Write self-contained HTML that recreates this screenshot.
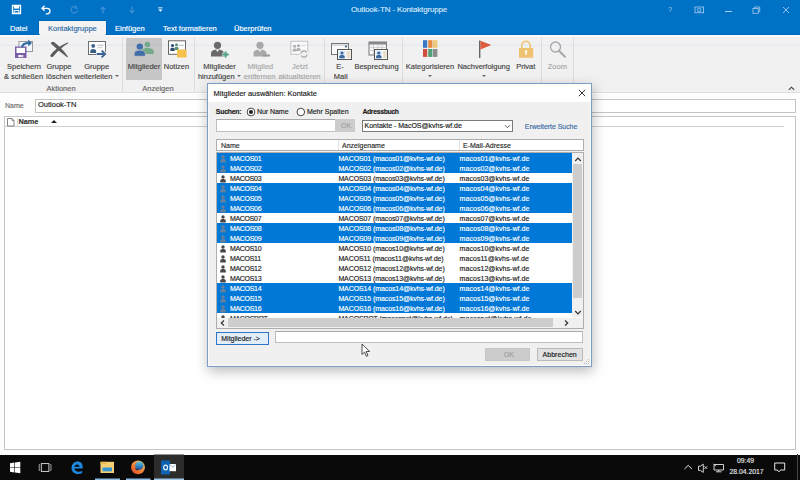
<!DOCTYPE html>
<html><head><meta charset="utf-8">
<style>
*{box-sizing:border-box;margin:0;padding:0}
html,body{width:800px;height:480px;overflow:hidden;background:#fff}
body{position:relative;font-family:"Liberation Sans",sans-serif;font-size:7.5px;color:#262626}
.a{position:absolute}
.t{position:absolute;white-space:nowrap;line-height:1;-webkit-text-stroke:0.15px currentColor}
#title{left:0;top:0;width:800px;height:35px;background:#0072c6}
#ribbon{left:0;top:35px;width:800px;height:58px;background:#f1f1f1;border-bottom:1px solid #dedede}
.tab{color:#fff;font-size:7.5px;top:25px}
.lbl{color:#444;font-size:7.5px;text-align:center}
.grp{color:#666;font-size:7.5px;text-align:center}
.sep{position:absolute;top:38px;width:1px;height:54px;background:#dddddd}
.dd{display:inline-block;width:0;height:0;border-left:2px solid transparent;border-right:2px solid transparent;border-top:2.2px solid #666;font-size:0;vertical-align:middle;position:relative;top:-0.5px}
.dis{color:#a8a8a8}
#content{left:0;top:94px;width:800px;height:361px;background:#fdfdfd}
#taskbar{left:0;top:454.5px;width:800px;height:25.5px;background:#0a0a0a}
#dlg{left:207px;top:83px;width:385px;height:284px;background:#f0f0f0;border:1px solid #7c9ec4;box-shadow:inset 0 0 0 1px #f6f9fc,1px 4px 12px rgba(0,0,0,.28)}
.row{position:absolute;left:0;width:355px;height:10px;font-size:7px;color:#1a1a1a;background:#fff}
.row.s{background:#0078d7;color:#fff}
.row span{-webkit-text-stroke:0.15px currentColor;position:absolute;top:1.9px;line-height:1;white-space:nowrap;letter-spacing:-0.1px}
</style></head><body>

<div id="title" class="a">
 <!-- save icon -->
 <svg class="a" style="left:11px;top:4px" width="11" height="11" viewBox="0 0 11 11"><path d="M1.5 1.5h8v8h-8z" fill="none" stroke="#fff" stroke-width="1.3"/><rect x="3" y="2" width="5" height="2.6" fill="#fff"/><rect x="3.2" y="6.6" width="4.6" height="2.6" fill="none" stroke="#fff" stroke-width="1"/></svg>
 <!-- undo -->
 <svg class="a" style="left:40px;top:4px" width="12" height="11" viewBox="0 0 12 11"><path d="M2.2 4.3h5a2.8 2.8 0 0 1 0 5.6H5.8" fill="none" stroke="#fff" stroke-width="1.3"/><path d="M4.6 1.8L2 4.3l2.6 2.5" fill="none" stroke="#fff" stroke-width="1.3"/></svg>
 <!-- redo disabled -->
 <svg class="a" style="left:69px;top:4px" width="11" height="11" viewBox="0 0 11 11"><path d="M7.8 3.6A3.3 3.3 0 1 0 8.6 6.5" fill="none" stroke="#3d8ed3" stroke-width="1.2"/><path d="M6.4 1.6v2.6H9" fill="none" stroke="#3d8ed3" stroke-width="1.1"/></svg>
 <!-- up -->
 <svg class="a" style="left:98px;top:4px" width="10" height="11" viewBox="0 0 10 11"><path d="M5 9.5V3.5M2.6 5.6L5 3.2l2.4 2.4" fill="none" stroke="#3d8ed3" stroke-width="1.3"/></svg>
 <!-- down -->
 <svg class="a" style="left:127px;top:4px" width="10" height="11" viewBox="0 0 10 11"><path d="M5 2.5v6M2.6 6.4L5 8.8l2.4-2.4" fill="none" stroke="#3d8ed3" stroke-width="1.3"/></svg>
 <!-- customize -->
 <svg class="a" style="left:156px;top:5px" width="9" height="9" viewBox="0 0 9 9"><rect x="2.3" y="2.4" width="4.2" height="0.9" fill="#fff"/><path d="M2.3 4.6h4.2L4.4 6.8z" fill="#fff"/></svg>
 <div class="t" style="left:351px;top:6px;font-size:8px;color:#d3e6f7;letter-spacing:-0.15px">Outlook-TN - Kontaktgruppe</div>
  <div class="t" style="left:668px;top:6px;font-size:7.5px;color:#a9cdee;-webkit-text-stroke:0">?</div>
 <svg class="a" style="left:694px;top:6px" width="11" height="8" viewBox="0 0 11 8"><rect x="1" y="1" width="8.6" height="5.8" fill="none" stroke="#a9cdee" stroke-width="0.8"/><rect x="3.8" y="2.8" width="3" height="2.6" fill="none" stroke="#a9cdee" stroke-width="0.7"/></svg>
 <div class="a" style="left:725px;top:10.8px;width:7px;height:0.9px;background:#a9cdee"></div>
 <svg class="a" style="left:752px;top:6px" width="9" height="8" viewBox="0 0 9 8"><rect x="1" y="2.5" width="5.2" height="4.8" fill="none" stroke="#a9cdee" stroke-width="0.8"/><path d="M2.5 2.5V1h5.2v4.8H6.2" fill="none" stroke="#a9cdee" stroke-width="0.8"/></svg>
 <svg class="a" style="left:782px;top:6px" width="8" height="8" viewBox="0 0 8 8"><path d="M1 1l6 6M7 1L1 7" stroke="#a9cdee" stroke-width="0.85"/></svg>
<!-- tabs -->
 <div class="t tab" style="left:10px">Datei</div>
 <div class="a" style="left:39px;top:20.5px;width:66.5px;height:15.5px;background:#f3f3f3;box-shadow:0 0 0 0.6px #005fae"></div>
 <div class="t tab" style="left:48px;color:#2b6aa8">Kontaktgruppe</div>
 <div class="t tab" style="left:115px">Einfügen</div>
 <div class="t tab" style="left:163px">Text formatieren</div>
 <div class="t tab" style="left:234px">Überprüfen</div>
</div>

<div id="ribbon" class="a"></div>
<div id="rib">
<div class="t lbl" style="left:-6.0px;top:62.5px;width:60px">Speichern</div>
<div class="t lbl" style="left:-6.5px;top:72.5px;width:60px">&amp; schließen</div>
<div class="t lbl" style="left:29.0px;top:62.5px;width:60px">Gruppe</div>
<div class="t lbl" style="left:29.0px;top:72.5px;width:60px">löschen</div>
<div class="t lbl" style="left:66.7px;top:62.5px;width:60px">Gruppe</div>
<div class="t lbl" style="left:66.5px;top:72.5px;width:60px">weiterleiten <span class="dd"></span></div>
<div class="t grp" style="left:31.0px;top:84.5px;width:60px">Aktionen</div>
<div class="sep" style="left:122px"></div>
<div class="a" style="left:126px;top:37.5px;width:36px;height:42.5px;background:#c6c6c6"></div>
<div class="t lbl" style="left:124.0px;top:62.5px;width:40px">Mitglieder</div>
<div class="t lbl" style="left:146.5px;top:62.5px;width:60px">Notizen</div>
<div class="t grp" style="left:128.0px;top:84.5px;width:60px">Anzeigen</div>
<div class="sep" style="left:194px"></div>
<div class="t lbl" style="left:189.5px;top:62.5px;width:60px">Mitglieder</div>
<div class="t lbl" style="left:189.3px;top:72.5px;width:60px">hinzufügen <span class="dd"></span></div>
<div class="t lbl dis" style="left:230.3px;top:62.5px;width:60px">Mitglied</div>
<div class="t lbl dis" style="left:229.7px;top:72.5px;width:60px">entfernen</div>
<div class="t lbl dis" style="left:270.0px;top:62.5px;width:60px">Jetzt</div>
<div class="t lbl dis" style="left:269.5px;top:72.5px;width:60px">aktualisieren</div>
<div class="sep" style="left:324px"></div>
<div class="t lbl" style="left:310.0px;top:62.5px;width:60px">E-</div>
<div class="t lbl" style="left:310.7px;top:72.5px;width:60px">Mail</div>
<div class="t lbl" style="left:346.5px;top:62.5px;width:60px">Besprechung</div>
<div class="sep" style="left:402px"></div>
<div class="t lbl" style="left:400.0px;top:62.5px;width:60px">Kategorisieren</div>
<div class="t lbl" style="left:400.3px;top:72.5px;width:60px"><span class="dd"></span></div>
<div class="t lbl" style="left:453.7px;top:62.5px;width:60px">Nachverfolgung</div>
<div class="t lbl" style="left:453.6px;top:72.5px;width:60px"><span class="dd"></span></div>
<div class="t lbl" style="left:495.79999999999995px;top:62.5px;width:60px">Privat</div>
<div class="sep" style="left:541px"></div>
<div class="t lbl dis" style="left:527.3px;top:62.5px;width:60px">Zoom</div>
<div class="sep" style="left:573px"></div>
<svg class="a" style="left:787.5px;top:85.5px" width="7" height="5" viewBox="0 0 7 5"><path d="M0.8 3.8l2.7-2.6 2.7 2.6" fill="none" stroke="#3a3a3a" stroke-width="1.1"/></svg>
</div>
<svg class="a" style="left:0;top:0" width="800" height="94" viewBox="0 0 800 94">
<rect x="0" y="34.2" width="40" height="0.8" fill="#0064b4"/><rect x="105.5" y="34.2" width="694.5" height="0.8" fill="#0064b4"/><rect x="0" y="35" width="40" height="1.5" fill="#f7fcff"/><rect x="105.5" y="35" width="694.5" height="1.5" fill="#f7fcff"/>

<!-- save & close -->
<rect x="19" y="41.5" width="13.5" height="10" fill="#f4f8fb" stroke="#9a9a9a" stroke-width="1"/>
<rect x="15" y="46.5" width="11.5" height="11.5" fill="#7b5ea7"/>
<rect x="16.5" y="47.8" width="8.5" height="5.2" fill="#fff"/>
<rect x="18.3" y="55" width="5" height="2.2" fill="#fff"/>
<rect x="21.5" y="55" width="0.8" height="2.2" fill="#a58fc6"/>
<path d="M22 47.5C22.3 44.5 24.5 43 28.8 43" fill="none" stroke="#2f6aa3" stroke-width="2.2"/>
<path d="M28.2 39.6l3.8 3.4-3.8 3.4z" fill="#2f6aa3"/>
<!-- X -->
<path d="M50.8 43.6Q51.4 41.2 53.8 42Q61.8 47.6 67.9 56.6Q67.6 57.5 66.8 57Q58.8 51.2 50.8 43.6z" fill="#5a5a5a"/><path d="M50.2 55.4Q56 47.4 67.4 42.5Q68.6 42.4 68.2 43.3Q59.4 48.6 53.2 56.6Q50.8 58.2 50.2 55.4z" fill="#5a5a5a"/>
<!-- weiterleiten card -->
<rect x="88.5" y="41.5" width="17" height="13" fill="#fff" stroke="#6e6e6e" stroke-width="1"/>
<circle cx="93.2" cy="45.9" r="1.9" fill="#3a5d85"/>
<path d="M90.3 53v-1.8c0-1.5 1.3-2.2 2.9-2.2s2.9 0.7 2.9 2.2V53z" fill="#3a5d85"/>
<rect x="97.5" y="44.8" width="6" height="0.8" fill="#aaa"/><rect x="97.5" y="47.3" width="5" height="0.8" fill="#bbb"/>
<path d="M96.5 54h8.5M101.6 50.6l3.6 3.4-3.6 3.4" fill="none" stroke="#f1f1f1" stroke-width="3.6"/><path d="M96.8 54h8.4M101.6 50.6l3.6 3.4-3.6 3.4" fill="none" stroke="#3e6396" stroke-width="1.8"/>
<!-- Mitglieder (selected) -->
<circle cx="147.4" cy="44.5" r="2.8" fill="#74a989"/>
<path d="M141 54v-2.5c0-2.4 2.9-3.6 6.4-3.6s6.4 1.2 6.4 3.6V54z" fill="#74a989"/>
<circle cx="139.8" cy="46.6" r="3.2" fill="#3f6ea9"/>
<path d="M134.2 56.3v-2.6c0-2.6 2.6-3.6 5.6-3.6s5.6 1 5.6 3.6v2.6z" fill="#3f6ea9" stroke="#c6c6c6" stroke-width="0.8"/>
<!-- Notizen -->
<rect x="168.5" y="40.8" width="17" height="13.5" fill="#fff" stroke="#666" stroke-width="1"/>
<circle cx="172.5" cy="45.5" r="1.6" fill="#2d4d6e"/><path d="M170.3 51v-1.5c0-1.2 1-1.8 2.2-1.8s2.2 0.6 2.2 1.8V51z" fill="#2d4d6e"/>
<circle cx="176.5" cy="44.8" r="1.5" fill="#5a8f73"/><path d="M174.5 50v-1.5c0-1.1 0.9-1.7 2-1.7s2 0.6 2 1.7V50z" fill="#5a8f73"/>
<rect x="179" y="44.8" width="4.5" height="0.7" fill="#999"/>
<rect x="177" y="49.5" width="9.5" height="8" fill="#f6c04d" rx="0.5"/>
<!-- Mitglieder hinzufuegen -->
<circle cx="217.5" cy="45.3" r="3.6" fill="#6a6a6a"/>
<path d="M211 56.6v-3.2c0-2.7 3-4 6.5-4s6.5 1.3 6.5 4v3.2z" fill="#6a6a6a"/>
<path d="M215.6 49.4l1.9 2.5 1.9-2.5z" fill="#f1f1f1"/>
<path d="M222.3 54.5h6.6M225.6 51.2v6.6" stroke="#f1f1f1" stroke-width="3.6"/><path d="M222.5 54.5h6.2M225.6 51.4v6.2" stroke="#4fa283" stroke-width="2.1"/>
<!-- Mitglied entfernen disabled -->
<circle cx="260" cy="45.3" r="3.6" fill="#a9a9a9"/>
<path d="M253.5 56.6v-3.2c0-2.7 3-4 6.5-4s6.5 1.3 6.5 4v3.2z" fill="#a9a9a9"/>
<path d="M258.1 49.4l1.9 2.5 1.9-2.5z" fill="#f1f1f1"/>
<rect x="263" y="54.5" width="7" height="2" fill="#9a9a9a"/>
<!-- Jetzt aktualisieren disabled -->
<rect x="290.8" y="41.3" width="17" height="13" fill="#fafafa" stroke="#c2c2c2" stroke-width="1"/>
<circle cx="294.6" cy="46.3" r="1.5" fill="#b0b0b0"/><path d="M292.5 51.5v-1.2c0-1.1 1-1.7 2.1-1.7s2.1 0.6 2.1 1.7v1.2z" fill="#b0b0b0"/>
<circle cx="298.5" cy="45.8" r="1.5" fill="#b0b0b0"/><path d="M296.4 51v-1.2c0-1.1 1-1.7 2.1-1.7s2.1 0.6 2.1 1.7V51z" fill="#b0b0b0"/>
<rect x="301.5" y="45.5" width="4" height="0.7" fill="#ccc"/>
<circle cx="304" cy="54" r="4.6" fill="#f1f1f1"/>
<path d="M300.8 53.5a3.3 3.3 0 0 1 6-1.2M307.2 54.5a3.3 3.3 0 0 1-6 1.2" fill="none" stroke="#a3a3a3" stroke-width="1.2"/>
<!-- E-Mail -->
<rect x="331.5" y="43.5" width="17" height="11" fill="#fafafa" stroke="#777" stroke-width="1"/>
<rect x="332" y="44" width="16" height="2" fill="#e0e0e0"/>
<circle cx="346" cy="46.5" r="1" fill="#2d4d6e"/>
<rect x="337.5" y="49.5" width="14" height="10" fill="#fff" stroke="#555" stroke-width="1"/>
<rect x="338.5" y="50.5" width="7" height="8" fill="#dce9f5"/>
<circle cx="342" cy="53" r="1.6" fill="#3b6aa0"/><path d="M339.3 58.2v-1.4c0-1.2 1.2-1.8 2.7-1.8s2.7 0.6 2.7 1.8v1.4z" fill="#3b6aa0"/>
<rect x="346.5" y="51" width="4" height="7" fill="#e8dccb"/>
<!-- Besprechung -->
<rect x="369" y="42" width="17.5" height="13" fill="#fafafa" stroke="#777" stroke-width="1"/>
<rect x="369" y="42" width="17.5" height="2.5" fill="#888"/>
<path d="M369 47.5h17.5M369 50.5h17.5M373.5 44.5v10.5M377.8 44.5v10.5M382 44.5v10.5" stroke="#c0c0c0" stroke-width="0.7"/>
<rect x="374.5" y="49.5" width="13" height="10" fill="#fff" stroke="#555" stroke-width="1"/>
<rect x="375.5" y="50.5" width="6.5" height="8" fill="#dce9f5"/>
<circle cx="378.8" cy="53" r="1.6" fill="#3b6aa0"/><path d="M376.1 58.2v-1.4c0-1.2 1.2-1.8 2.7-1.8s2.7 0.6 2.7 1.8v1.4z" fill="#3b6aa0"/>
<rect x="383" y="51" width="3.5" height="7" fill="#e8dccb"/>
<!-- Kategorisieren -->
<rect x="423" y="40.2" width="4.2" height="7.6" fill="#3a76c4"/><rect x="428.2" y="40.2" width="4.2" height="7.6" fill="#e8883a"/><rect x="433" y="40.2" width="4.4" height="7.6" fill="#efc97a"/>
<rect x="423" y="49" width="4.2" height="7.9" fill="#cf4f3c"/><rect x="428.2" y="49" width="4.2" height="7.9" fill="#4f9f78"/><rect x="433" y="49" width="4.4" height="7.9" fill="#8d8d8d"/>
<!-- flag -->
<rect x="479" y="40.5" width="1.4" height="17.5" fill="#666"/>
<path d="M480.4 40.8l11 4.2-11 4.4z" fill="#e05a3a"/>
<!-- lock -->
<path d="M521.8 48v-2.5a4.2 4.2 0 0 1 8.4 0V48" fill="none" stroke="#eec97a" stroke-width="1.8"/>
<rect x="519" y="48" width="14.2" height="9.8" fill="#eec270"/>
<rect x="525.5" y="51" width="1.3" height="4" fill="#fff"/><circle cx="526.1" cy="51.5" r="1.2" fill="#fff"/>
<!-- zoom -->
<circle cx="555.5" cy="47" r="5" fill="none" stroke="#a9a9a9" stroke-width="1.4"/>
<path d="M559 50.8l6 6" stroke="#a9a9a9" stroke-width="2.2" stroke-linecap="round"/>
<rect x="0" y="44.5" width="800" height="1.2" fill="rgba(90,170,255,0.09)"/>
</svg>

<div id="content" class="a"></div>
<div class="t" style="left:5px;top:101.5px;font-size:7px;color:#6f6f6f">Name</div>
<div class="a" style="left:35px;top:98.5px;width:761px;height:14px;background:#fff;border:1px solid #c4c4c4"></div>
<div class="t" style="left:38px;top:101.2px;font-size:7.5px;color:#222">Outlook-TN</div>
<div class="a" style="left:4px;top:115.5px;width:792px;height:334.5px;background:#fff;border:1px solid #c6c6c6"></div>
<div class="a" style="left:5px;top:126px;width:779px;height:1px;background:#d0d0d0"></div>
<svg class="a" style="left:6px;top:117px" width="12" height="10" viewBox="0 0 12 10"><path d="M1.5 1.5h4.5l2 2v5.5h-6.5z" fill="#fff" stroke="#777" stroke-width="0.9"/><path d="M6 1.5v2h2" fill="none" stroke="#777" stroke-width="0.8"/><rect x="11" y="1" width="1" height="8" fill="#ddd"/></svg>
<div class="t" style="left:18.5px;top:118.3px;font-size:7.3px;font-weight:bold;color:#333">Name</div>
<svg class="a" style="left:50px;top:119px" width="8" height="5" viewBox="0 0 8 5"><path d="M1 4L4 1l3 3z" fill="#222"/></svg>

<div id="taskbar" class="a"></div>
<svg class="a" style="left:0;top:454px" width="800" height="26" viewBox="0 454 800 26">
<!-- windows -->
<path d="M10 463.2l4.4-0.6v4.6H10z M15 462.5l5.3-0.7v5.4H15z M10 467.8h4.4v4.6L10 471.8z M15 467.8h5.3v5.4L15 472.5z" fill="#fff"/>
<!-- task view -->
<rect x="41.3" y="463.6" width="7.6" height="7.8" fill="none" stroke="#e0e0e0" stroke-width="0.9"/>
<path d="M40 464.6h-0.8v5.8H40M50.2 464.6h0.8v5.8h-0.8" fill="none" stroke="#c8c8c8" stroke-width="0.8"/>
<!-- edge -->
<path d="M82.5 468.6H74.4c0.2 2 1.8 3.2 4 3.2 1.5 0 2.8-0.4 3.8-1v2.2c-1.1 0.6-2.6 0.9-4.3 0.9-3.5 0-6.4-2.3-6.4-6 0-3.8 2.8-6.3 6.3-6.3 3.1 0 4.9 2.3 4.9 5.6z M74.4 466.8h5.2c0-1.3-0.9-2.3-2.4-2.3-1.5 0-2.6 1-2.8 2.3z" fill="#1f87e0"/>
<!-- explorer -->
<rect x="100.5" y="461.8" width="13.5" height="11.2" fill="#f4cf73"/>
<rect x="100.5" y="461.8" width="6" height="2" fill="#e8b84f"/>
<rect x="102.5" y="467.5" width="9.5" height="3.8" fill="#3596d2"/>
<!-- firefox -->
<defs><linearGradient id="ffg" x1="0" y1="1" x2="1" y2="0"><stop offset="0" stop-color="#e2452b"/><stop offset="0.55" stop-color="#f08a35"/><stop offset="1" stop-color="#f6d66a"/></linearGradient>
<linearGradient id="ffb" x1="0" y1="0" x2="0" y2="1"><stop offset="0" stop-color="#5cc6e8"/><stop offset="1" stop-color="#1b4fa0"/></linearGradient></defs>
<circle cx="138" cy="467.4" r="6.9" fill="url(#ffg)"/>
<circle cx="139.3" cy="465.6" r="4.2" fill="url(#ffb)"/>
<path d="M131.4 465.5c0.6-1.8 1.8-3.2 3.2-4 -0.4 1.2-0.2 2.4 0.6 3.2 -1.2 0.2-2.6 0.2-3.8 0.8z" fill="#f08a35"/>
<path d="M135 467.5c1.2 1.6 3.2 2.2 5 1.6 -1 1-2.8 1.4-4.2 0.8z" fill="#22284a"/>
<!-- outlook active -->
<rect x="154" y="454.5" width="30" height="25.5" fill="#2c2c2c"/>
<rect x="161" y="460.4" width="9" height="14" rx="0.5" fill="#0e62b3"/>
<rect x="169.5" y="464" width="6.5" height="7.2" fill="#fff"/>
<path d="M170 464.5l2.8 2.8 2.8-2.8" fill="none" stroke="#5a7ea8" stroke-width="0.7"/>
<ellipse cx="165.6" cy="467.5" rx="1.9" ry="2.4" fill="none" stroke="#e8f4ff" stroke-width="1.2"/>
<rect x="95" y="478.5" width="25" height="1.5" fill="#90bde4"/>
<rect x="126" y="478.5" width="24.5" height="1.5" fill="#90bde4"/>
<rect x="154" y="478.5" width="30" height="1.5" fill="#9fc8ea"/>
<!-- tray -->
<path d="M684.5 469l3.7-3.6 3.7 3.6" fill="none" stroke="#e6e6e6" stroke-width="1"/>
<path d="M698.5 466.2h1.8l3-2v8.2l-3-2h-1.8z" fill="none" stroke="#e6e6e6" stroke-width="0.9"/>
<path d="M704.5 466.3l2.6 2.6M707.1 466.3l-2.6 2.6" stroke="#e6e6e6" stroke-width="0.9"/>
<path d="M714 464.5h9.5v5.5H714z" fill="none" stroke="#e6e6e6" stroke-width="0.9"/>
<path d="M718.7 470v1.6M716 471.8h5.5M713.5 463.8l2.5 2.5" stroke="#e6e6e6" stroke-width="0.9"/>
<path d="M774.7 463h10v7h-4.2l-1.6 1.8-1.6-1.8h-2.6z" fill="none" stroke="#e6e6e6" stroke-width="1"/>
<rect x="797" y="454" width="1" height="26" fill="#444"/>
</svg>
<div class="t" style="left:737px;top:458.3px;font-size:6.8px;color:#e6e6e6">09:49</div>
<div class="t" style="left:729.5px;top:468.6px;font-size:6.8px;color:#e6e6e6">28.04.2017</div>

<!--DLG START-->
<div id="dlg" class="a"></div>
<div class="a" style="left:208px;top:84px;width:383px;height:18px;background:#fff"></div>
<div class="t" style="left:213.6px;top:90px;font-size:7.4px;color:#1a1a1a;font-weight:normal;letter-spacing:0.02px;">Mitglieder auswählen: Kontakte</div>
<svg class="a" style="left:578px;top:88.5px" width="8" height="8" viewBox="0 0 8 8"><path d="M0.8 0.8l6.4 6.4M7.2 0.8L0.8 7.2" stroke="#222" stroke-width="0.9"/></svg>
<div class="t" style="left:215.85px;top:109px;font-size:6.9px;color:#1a1a1a;font-weight:bold;letter-spacing:-0.25px;">Suchen:</div>
<svg class="a" style="left:246px;top:106.5px" width="10" height="10" viewBox="0 0 10 10"><circle cx="5" cy="5" r="3.9" fill="#fff" stroke="#333" stroke-width="0.9"/><circle cx="5" cy="5" r="2.1" fill="#222"/></svg>
<div class="t" style="left:257px;top:108px;font-size:7px;color:#1a1a1a;font-weight:normal;letter-spacing:-0.05px;">Nur Name</div>
<svg class="a" style="left:296px;top:107px" width="10" height="10" viewBox="0 0 10 10"><circle cx="4.8" cy="5" r="3.8" fill="#fff" stroke="#333" stroke-width="0.9"/></svg>
<div class="t" style="left:306.9px;top:108px;font-size:7px;color:#1a1a1a;font-weight:normal;letter-spacing:0px;">Mehr Spalten</div>
<div class="t" style="left:362.4px;top:109px;font-size:6.8px;color:#1a1a1a;font-weight:bold;letter-spacing:-0.3px;">Adressbuch</div>
<div class="a" style="left:215.5px;top:119.3px;width:120px;height:12.4px;background:#fff;border:1px solid #c0c0c0;border-top-color:#a9a9a9;border-right:none"></div>
<div class="a" style="left:335.2px;top:119.4px;width:20.3px;height:12.4px;background:#cccccc"></div>
<div class="t" style="left:341px;top:122px;font-size:7px;color:#a3a3a3;font-weight:normal;letter-spacing:0px;">OK</div>
<div class="a" style="left:362.2px;top:120px;width:150.5px;height:11.5px;background:#fff;border:1px solid #7a7a7a"></div>
<div class="t" style="left:364.6px;top:122px;font-size:7px;color:#1a1a1a;font-weight:normal;letter-spacing:-0.02px;">Kontakte - MacOS@kvhs-wf.de</div>
<svg class="a" style="left:504px;top:124px" width="7" height="5" viewBox="0 0 7 5"><path d="M1 1.2l2.5 2.5L6 1.2" fill="none" stroke="#444" stroke-width="0.9"/></svg>
<div class="t" style="left:524.8px;top:123px;font-size:7px;color:#3a6ca5;font-weight:normal;letter-spacing:-0.05px;">Erweiterte Suche</div>
<div class="a" style="left:215.7px;top:138.5px;width:368px;height:12px;background:#fff;border:1px solid #adadad"></div>
<div class="a" style="left:337.5px;top:139.5px;width:1px;height:10px;background:#e3e3e3"></div>
<div class="a" style="left:459.3px;top:139.5px;width:1px;height:10px;background:#e3e3e3"></div>
<div class="t" style="left:221px;top:142px;font-size:7px;color:#2a2a2a;font-weight:normal;letter-spacing:0px;">Name</div>
<div class="t" style="left:342px;top:142px;font-size:7px;color:#2a2a2a;font-weight:normal;letter-spacing:0px;">Anzeigename</div>
<div class="t" style="left:463px;top:142px;font-size:7px;color:#2a2a2a;font-weight:normal;letter-spacing:0px;">E-Mail-Adresse</div>
<div class="a" style="left:215.6px;top:152.3px;width:368px;height:176.7px;background:#fff;border:1px solid #adadad"></div>
<div class="a" style="left:216.9px;top:153px;width:355px;height:164.5px;overflow:hidden">
<div class="row s" style="top:0px;height:10px;overflow:hidden"><svg style="position:absolute;left:3.4px;top:1.5px" width="6" height="8" viewBox="0 0 6 8"><circle cx="3" cy="2" r="1.7" fill="#64809e"/><path d="M0.2 7.5V5.8C0.2 4.6 1.5 4 3 4s2.8 0.6 2.8 1.8V7.5z" fill="#64809e"/></svg><span style="left:13px;letter-spacing:-0.3px">MACOS01</span><span style="left:121.5px">MACOS01 (macos01@kvhs-wf.de)</span><span style="left:242.7px;letter-spacing:0.05px">macos01@kvhs-wf.de</span></div>
<div class="row s" style="top:10px;height:10px;overflow:hidden"><svg style="position:absolute;left:3.4px;top:1.5px" width="6" height="8" viewBox="0 0 6 8"><circle cx="3" cy="2" r="1.7" fill="#64809e"/><path d="M0.2 7.5V5.8C0.2 4.6 1.5 4 3 4s2.8 0.6 2.8 1.8V7.5z" fill="#64809e"/></svg><span style="left:13px;letter-spacing:-0.3px">MACOS02</span><span style="left:121.5px">MACOS02 (macos02@kvhs-wf.de)</span><span style="left:242.7px;letter-spacing:0.05px">macos02@kvhs-wf.de</span></div>
<div class="row" style="top:20px;height:10px;overflow:hidden"><svg style="position:absolute;left:3.4px;top:1.5px" width="6" height="8" viewBox="0 0 6 8"><circle cx="3" cy="2" r="1.7" fill="#474747"/><path d="M0.2 7.5V5.8C0.2 4.6 1.5 4 3 4s2.8 0.6 2.8 1.8V7.5z" fill="#474747"/></svg><span style="left:13px;letter-spacing:-0.3px">MACOS03</span><span style="left:121.5px">MACOS03 (macos03@kvhs-wf.de)</span><span style="left:242.7px;letter-spacing:0.05px">macos03@kvhs-wf.de</span></div>
<div class="row s" style="top:30px;height:10px;overflow:hidden"><svg style="position:absolute;left:3.4px;top:1.5px" width="6" height="8" viewBox="0 0 6 8"><circle cx="3" cy="2" r="1.7" fill="#64809e"/><path d="M0.2 7.5V5.8C0.2 4.6 1.5 4 3 4s2.8 0.6 2.8 1.8V7.5z" fill="#64809e"/></svg><span style="left:13px;letter-spacing:-0.3px">MACOS04</span><span style="left:121.5px">MACOS04 (macos04@kvhs-wf.de)</span><span style="left:242.7px;letter-spacing:0.05px">macos04@kvhs-wf.de</span></div>
<div class="row s" style="top:40px;height:10px;overflow:hidden"><svg style="position:absolute;left:3.4px;top:1.5px" width="6" height="8" viewBox="0 0 6 8"><circle cx="3" cy="2" r="1.7" fill="#64809e"/><path d="M0.2 7.5V5.8C0.2 4.6 1.5 4 3 4s2.8 0.6 2.8 1.8V7.5z" fill="#64809e"/></svg><span style="left:13px;letter-spacing:-0.3px">MACOS05</span><span style="left:121.5px">MACOS05 (macos05@kvhs-wf.de)</span><span style="left:242.7px;letter-spacing:0.05px">macos05@kvhs-wf.de</span></div>
<div class="row s" style="top:50px;height:10px;overflow:hidden"><svg style="position:absolute;left:3.4px;top:1.5px" width="6" height="8" viewBox="0 0 6 8"><circle cx="3" cy="2" r="1.7" fill="#64809e"/><path d="M0.2 7.5V5.8C0.2 4.6 1.5 4 3 4s2.8 0.6 2.8 1.8V7.5z" fill="#64809e"/></svg><span style="left:13px;letter-spacing:-0.3px">MACOS06</span><span style="left:121.5px">MACOS06 (macos06@kvhs-wf.de)</span><span style="left:242.7px;letter-spacing:0.05px">macos06@kvhs-wf.de</span></div>
<div class="row" style="top:60px;height:10px;overflow:hidden"><svg style="position:absolute;left:3.4px;top:1.5px" width="6" height="8" viewBox="0 0 6 8"><circle cx="3" cy="2" r="1.7" fill="#474747"/><path d="M0.2 7.5V5.8C0.2 4.6 1.5 4 3 4s2.8 0.6 2.8 1.8V7.5z" fill="#474747"/></svg><span style="left:13px;letter-spacing:-0.3px">MACOS07</span><span style="left:121.5px">MACOS07 (macos07@kvhs-wf.de)</span><span style="left:242.7px;letter-spacing:0.05px">macos07@kvhs-wf.de</span></div>
<div class="row s" style="top:70px;height:10px;overflow:hidden"><svg style="position:absolute;left:3.4px;top:1.5px" width="6" height="8" viewBox="0 0 6 8"><circle cx="3" cy="2" r="1.7" fill="#64809e"/><path d="M0.2 7.5V5.8C0.2 4.6 1.5 4 3 4s2.8 0.6 2.8 1.8V7.5z" fill="#64809e"/></svg><span style="left:13px;letter-spacing:-0.3px">MACOS08</span><span style="left:121.5px">MACOS08 (macos08@kvhs-wf.de)</span><span style="left:242.7px;letter-spacing:0.05px">macos08@kvhs-wf.de</span></div>
<div class="row s" style="top:80px;height:10px;overflow:hidden"><svg style="position:absolute;left:3.4px;top:1.5px" width="6" height="8" viewBox="0 0 6 8"><circle cx="3" cy="2" r="1.7" fill="#64809e"/><path d="M0.2 7.5V5.8C0.2 4.6 1.5 4 3 4s2.8 0.6 2.8 1.8V7.5z" fill="#64809e"/></svg><span style="left:13px;letter-spacing:-0.3px">MACOS09</span><span style="left:121.5px">MACOS09 (macos09@kvhs-wf.de)</span><span style="left:242.7px;letter-spacing:0.05px">macos09@kvhs-wf.de</span></div>
<div class="row" style="top:90px;height:10px;overflow:hidden"><svg style="position:absolute;left:3.4px;top:1.5px" width="6" height="8" viewBox="0 0 6 8"><circle cx="3" cy="2" r="1.7" fill="#474747"/><path d="M0.2 7.5V5.8C0.2 4.6 1.5 4 3 4s2.8 0.6 2.8 1.8V7.5z" fill="#474747"/></svg><span style="left:13px;letter-spacing:-0.3px">MACOS10</span><span style="left:121.5px">MACOS10 (macos10@kvhs-wf.de)</span><span style="left:242.7px;letter-spacing:0.05px">macos10@kvhs-wf.de</span></div>
<div class="row" style="top:100px;height:10px;overflow:hidden"><svg style="position:absolute;left:3.4px;top:1.5px" width="6" height="8" viewBox="0 0 6 8"><circle cx="3" cy="2" r="1.7" fill="#474747"/><path d="M0.2 7.5V5.8C0.2 4.6 1.5 4 3 4s2.8 0.6 2.8 1.8V7.5z" fill="#474747"/></svg><span style="left:13px;letter-spacing:-0.3px">MACOS11</span><span style="left:121.5px">MACOS11 (macos11@kvhs-wf.de)</span><span style="left:242.7px;letter-spacing:0.05px">macos11@kvhs-wf.de</span></div>
<div class="row" style="top:110px;height:10px;overflow:hidden"><svg style="position:absolute;left:3.4px;top:1.5px" width="6" height="8" viewBox="0 0 6 8"><circle cx="3" cy="2" r="1.7" fill="#474747"/><path d="M0.2 7.5V5.8C0.2 4.6 1.5 4 3 4s2.8 0.6 2.8 1.8V7.5z" fill="#474747"/></svg><span style="left:13px;letter-spacing:-0.3px">MACOS12</span><span style="left:121.5px">MACOS12 (macos12@kvhs-wf.de)</span><span style="left:242.7px;letter-spacing:0.05px">macos12@kvhs-wf.de</span></div>
<div class="row" style="top:120px;height:10px;overflow:hidden"><svg style="position:absolute;left:3.4px;top:1.5px" width="6" height="8" viewBox="0 0 6 8"><circle cx="3" cy="2" r="1.7" fill="#474747"/><path d="M0.2 7.5V5.8C0.2 4.6 1.5 4 3 4s2.8 0.6 2.8 1.8V7.5z" fill="#474747"/></svg><span style="left:13px;letter-spacing:-0.3px">MACOS13</span><span style="left:121.5px">MACOS13 (macos13@kvhs-wf.de)</span><span style="left:242.7px;letter-spacing:0.05px">macos13@kvhs-wf.de</span></div>
<div class="row s" style="top:130px;height:10px;overflow:hidden"><svg style="position:absolute;left:3.4px;top:1.5px" width="6" height="8" viewBox="0 0 6 8"><circle cx="3" cy="2" r="1.7" fill="#64809e"/><path d="M0.2 7.5V5.8C0.2 4.6 1.5 4 3 4s2.8 0.6 2.8 1.8V7.5z" fill="#64809e"/></svg><span style="left:13px;letter-spacing:-0.3px">MACOS14</span><span style="left:121.5px">MACOS14 (macos14@kvhs-wf.de)</span><span style="left:242.7px;letter-spacing:0.05px">macos14@kvhs-wf.de</span></div>
<div class="row s" style="top:140px;height:10px;overflow:hidden"><svg style="position:absolute;left:3.4px;top:1.5px" width="6" height="8" viewBox="0 0 6 8"><circle cx="3" cy="2" r="1.7" fill="#64809e"/><path d="M0.2 7.5V5.8C0.2 4.6 1.5 4 3 4s2.8 0.6 2.8 1.8V7.5z" fill="#64809e"/></svg><span style="left:13px;letter-spacing:-0.3px">MACOS15</span><span style="left:121.5px">MACOS15 (macos15@kvhs-wf.de)</span><span style="left:242.7px;letter-spacing:0.05px">macos15@kvhs-wf.de</span></div>
<div class="row s" style="top:150px;height:10px;overflow:hidden"><svg style="position:absolute;left:3.4px;top:1.5px" width="6" height="8" viewBox="0 0 6 8"><circle cx="3" cy="2" r="1.7" fill="#64809e"/><path d="M0.2 7.5V5.8C0.2 4.6 1.5 4 3 4s2.8 0.6 2.8 1.8V7.5z" fill="#64809e"/></svg><span style="left:13px;letter-spacing:-0.3px">MACOS16</span><span style="left:121.5px">MACOS16 (macos16@kvhs-wf.de)</span><span style="left:242.7px;letter-spacing:0.05px">macos16@kvhs-wf.de</span></div>
<div class="row" style="top:160px;height:5px;overflow:hidden"><svg style="position:absolute;left:3.4px;top:1.5px" width="6" height="8" viewBox="0 0 6 8"><circle cx="3" cy="2" r="1.7" fill="#474747"/><path d="M0.2 7.5V5.8C0.2 4.6 1.5 4 3 4s2.8 0.6 2.8 1.8V7.5z" fill="#474747"/></svg><span style="left:13px;letter-spacing:-0.3px">MACOSPOT</span><span style="left:121.5px">MACOSPOT (macospot@kvhs-wf.de)</span><span style="left:242.7px;letter-spacing:0.05px">macospot@kvhs-wf.de</span></div>
</div>
<div class="a" style="left:572px;top:153.3px;width:11px;height:164px;background:#f0f0f0"></div>
<div class="a" style="left:573.3px;top:164.4px;width:8.4px;height:133.6px;background:#cdcdcd"></div>
<svg class="a" style="left:573.5px;top:156.5px" width="8" height="5" viewBox="0 0 8 5"><path d="M1.2 4L4 1.2 6.8 4" fill="none" stroke="#333" stroke-width="1.2"/></svg>
<svg class="a" style="left:573.5px;top:310.2px" width="8" height="5" viewBox="0 0 8 5"><path d="M1.2 1L4 3.8 6.8 1" fill="none" stroke="#333" stroke-width="1.2"/></svg>
<div class="a" style="left:216.6px;top:317.8px;width:355.4px;height:10.2px;background:#f0f0f0"></div>
<div class="a" style="left:228px;top:318.3px;width:324.5px;height:9.2px;background:#cdcdcd"></div>
<svg class="a" style="left:219.5px;top:319.8px" width="5" height="6" viewBox="0 0 5 6"><path d="M4 0.5L1.3 3 4 5.5" fill="none" stroke="#333" stroke-width="1.2"/></svg>
<svg class="a" style="left:564.3px;top:319.8px" width="5" height="6" viewBox="0 0 5 6"><path d="M1 0.5L3.7 3 1 5.5" fill="none" stroke="#333" stroke-width="1.2"/></svg>
<div class="a" style="left:572px;top:317.8px;width:11px;height:10.2px;background:#f0f0f0"></div>
<div class="a" style="left:216px;top:331.9px;width:52.75px;height:13.1px;background:#e1eefa;border:1.2px solid #2f77c6"></div>
<div class="t" style="left:221.25px;top:335px;font-size:7px;color:#1a1a1a;font-weight:normal;letter-spacing:0px;">Mitglieder -&gt;</div>
<div class="a" style="left:275px;top:331.3px;width:308.4px;height:12.2px;background:#fff;border:1px solid #c0c0c0;border-top-color:#a9a9a9"></div>
<div class="a" style="left:485px;top:348px;width:45.4px;height:12.6px;background:#cccccc;border:1px solid #c6c6c6"></div>
<div class="t" style="left:503.7px;top:351px;font-size:7px;color:#a0a0a0;font-weight:normal;letter-spacing:0px;">OK</div>
<div class="a" style="left:537.4px;top:348px;width:45.6px;height:12.6px;background:#e1e1e1;border:1px solid #b9b9b9"></div>
<div class="t" style="left:542.5px;top:351px;font-size:7px;color:#1a1a1a;font-weight:normal;letter-spacing:0.05px;">Abbrechen</div>
<svg class="a" style="left:584px;top:359px" width="6" height="6" viewBox="0 0 6 6"><rect x="4" y="0" width="1" height="1" fill="#bbb"/><rect x="2" y="2" width="1" height="1" fill="#bbb"/><rect x="4" y="2" width="1" height="1" fill="#bbb"/><rect x="0" y="4" width="1" height="1" fill="#bbb"/><rect x="2" y="4" width="1" height="1" fill="#bbb"/><rect x="4" y="4" width="1" height="1" fill="#bbb"/></svg>
<svg class="a" style="left:361px;top:343px" width="9" height="14" viewBox="0 0 9 14"><path d="M1 1v10.5l2.6-2.4 1.8 4.2 1.6-0.7-1.8-4.1H8.6z" fill="#fff" stroke="#222" stroke-width="0.8"/></svg>
<!--DLG END-->

</body></html>
